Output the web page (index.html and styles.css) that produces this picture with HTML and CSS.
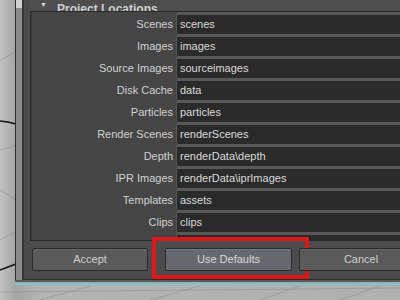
FILE: index.html
```html
<!DOCTYPE html>
<html>
<head>
<meta charset="utf-8">
<link rel="stylesheet" href="styles.css">
</head>
<body>
<svg class="viewport" width="400" height="300" viewBox="0 0 400 300">
  <g stroke="#8e8e8e" stroke-width="0.8" fill="none" opacity="0.7">
    <path d="M0 60 L16 52"/>
    <path d="M0 150 L16 146"/>
    <path d="M0 190 L16 200"/>
    <path d="M0 240 L16 232"/>
    <path d="M0 292 L400 288"/>
    <path d="M40 300 L90 286"/>
    <path d="M150 300 L200 286"/>
    <path d="M260 300 L300 286"/>
    <path d="M340 300 L380 286"/>
  </g>
  <path d="M0 121 L8 122 L16 124" stroke="#111" stroke-width="1.4" fill="none"/>
  <path d="M0 270 L16 264" stroke="#111" stroke-width="1.4" fill="none"/>
</svg>
<div class="window">
  <div class="rail"><div class="thumb"></div></div>
  <div class="main">
    <div class="header"><span class="tri">&#9660;</span><span class="title">Project Locations</span></div>
    <div class="frame">
      <div class="rows">
        <div class="row"><span class="label">Scenes</span><span class="field">scenes</span></div>
        <div class="row"><span class="label">Images</span><span class="field">images</span></div>
        <div class="row"><span class="label">Source Images</span><span class="field">sourceimages</span></div>
        <div class="row"><span class="label">Disk Cache</span><span class="field">data</span></div>
        <div class="row"><span class="label">Particles</span><span class="field">particles</span></div>
        <div class="row"><span class="label">Render Scenes</span><span class="field">renderScenes</span></div>
        <div class="row"><span class="label">Depth</span><span class="field">renderData\depth</span></div>
        <div class="row"><span class="label">IPR Images</span><span class="field">renderData\iprImages</span></div>
        <div class="row"><span class="label">Templates</span><span class="field">assets</span></div>
        <div class="row"><span class="label">Clips</span><span class="field">clips</span></div>
        <div class="row"><span class="label"></span><span class="field"></span></div>
      </div>
    </div>
    <div class="buttons">
      <div class="btn accept">Accept</div>
      <div class="btn defaults">Use Defaults<span class="highlight"></span></div>
      <div class="btn cancel">Cancel</div>
    </div>
  </div>
</div>
</body>
</html>
```

FILE: styles.css
```css
html, body {
  margin: 0;
  padding: 0;
}
body {
  position: relative;
  width: 400px;
  height: 300px;
  overflow: hidden;
  background: linear-gradient(90deg, #c2c2c2 0px, #a6a6a6 15px, #b4b4b4 40px, #b0b0b0 100%);
  font-family: "Liberation Sans", Arial, sans-serif;
  font-size: 11px;
}
.viewport {
  position: absolute;
  left: 0;
  top: 0;
}
.window {
  position: relative;
  margin-left: 15px;
  width: 385px;
  display: flex;
  padding-bottom: 2px;
  background: #5a5a5a;
  border-bottom: 1px solid #a8a8a8;
  box-shadow: 0 2px 0 #7cc3cb;
}
.rail {
  width: 6px;
  background: #8a8a8a;
  border-left: 1px solid #2c2c2c;
  border-right: 2px solid #353535;
}
.thumb {
  height: 8px;
  background: #d2d2d2;
}
.main {
  flex: 1;
  min-width: 0;
  height: 279px;
  padding-left: 6px;
  background: #4b4b4b;
  border-bottom: 1px solid #2e2e2e;
  overflow: hidden;
}
.header {
  height: 11px;
  display: flex;
  align-items: flex-end;
  overflow: hidden;
  color: #cfcfcf;
  font-weight: bold;
  font-size: 12px;
  line-height: 14px;
  background: #4e4e4e;
}
.tri {
  font-size: 7px;
  line-height: 12px;
  margin-left: 10px;
  width: 17px;
  color: #d8d8d8;
}
.title {
  white-space: nowrap;
  margin-bottom: -5px;
}
.frame {
  margin-right: -20px;
  border: 1px solid #2a2a2a;
  box-shadow: inset 1px 0 #3a3a3a;
  background: #454545;
}
.rows {
  height: 228px;
  overflow: hidden;
}
.row {
  display: flex;
  align-items: flex-end;
  height: 22px;
}
.label {
  width: 142px;
  margin-right: 3px;
  height: 19px;
  line-height: 19px;
  text-align: right;
  color: #d2d2d2;
  white-space: nowrap;
}
.field {
  flex: 1;
  height: 19px;
  line-height: 19px;
  box-sizing: content-box;
  border-top: 3px solid #585858;
  border-left: 1px solid #555;
  border-radius: 2px 0 0 2px;
  background: #2a2a2a;
  color: #dadada;
  padding-left: 3px;
  white-space: nowrap;
}
.buttons {
  display: flex;
  padding-left: 2px;
  margin-top: 7px;
}
.btn {
  position: relative;
  flex: none;
  height: 21px;
  line-height: 21px;
  text-align: center;
  border: 1px solid #2b2b2b;
  border-radius: 2px;
  background: #5a5a5a;
  color: #d0d0d0;
  box-shadow: inset 0 1px 0 #666;
}
.accept {
  width: 114px;
  margin-right: 17px;
}
.defaults {
  width: 125px;
  margin-right: 7px;
  background: #65696f;
  box-shadow: inset 0 1px 0 #747980;
  color: #d8d8d8;
}
.cancel {
  width: 122px;
}
.highlight {
  position: absolute;
  top: -12px;
  left: -14px;
  right: -18px;
  bottom: -9px;
  border: 4px solid #dc1717;
}
```
